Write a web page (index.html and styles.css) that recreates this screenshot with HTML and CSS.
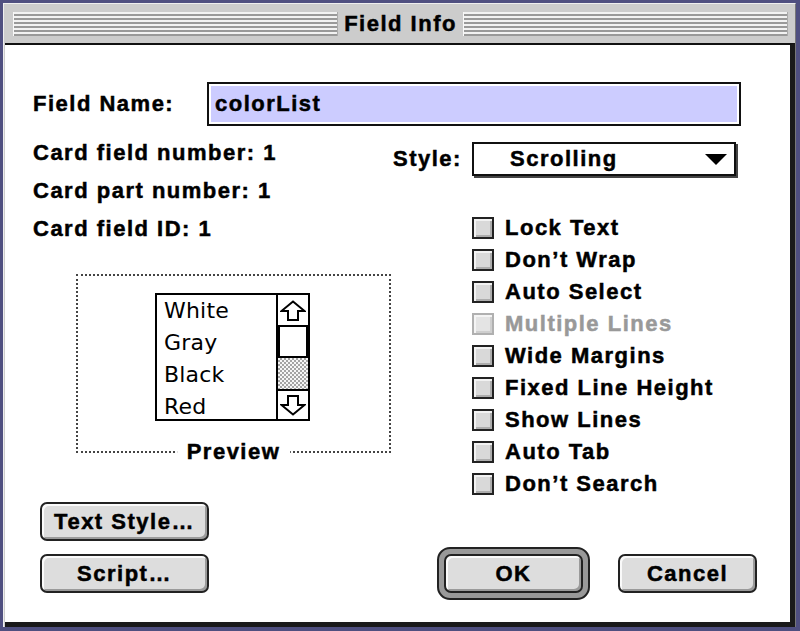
FILE: index.html
```html
<!DOCTYPE html>
<html>
<head>
<meta charset="utf-8">
<title>Field Info</title>
<link rel="stylesheet" href="styles.css">
</head>
<body>
<div class="window">
  <div class="titlebar">
    <div class="stripes"></div>
    <div class="title">Field Info</div>
    <div class="stripes"></div>
  </div>
  <div class="content">
    <div class="name-row">
      <div class="label name-label">Field Name:</div>
      <div class="edit"><div class="edit-sel label">colorList</div></div>
    </div>
    <div class="main">
      <div class="left">
        <div class="info">
          <div class="label">Card field number: 1</div>
          <div class="label">Card part number: 1</div>
          <div class="label">Card field ID: 1</div>
        </div>
        <div class="preview">
          <div class="list">
            <div class="items">
              <div>White</div>
              <div>Gray</div>
              <div>Black</div>
              <div>Red</div>
            </div>
            <div class="scrollbar">
              <div class="arrow">
                <svg width="26" height="21" viewBox="0 0 26 21"><polygon points="13,1.5 24.5,11 18,11 18,20 8,20 8,11 1.5,11" fill="#fff" stroke="#000" stroke-width="2" stroke-linejoin="miter"/></svg>
              </div>
              <div class="thumb"></div>
              <div class="track"></div>
              <div class="arrow down">
                <svg width="26" height="21" viewBox="0 0 26 21"><polygon points="8,1 18,1 18,10 24.5,10 13,19.5 1.5,10 8,10" fill="#fff" stroke="#000" stroke-width="2" stroke-linejoin="miter"/></svg>
              </div>
            </div>
          </div>
          <div class="preview-label label">Preview</div>
        </div>
        <div class="btn wide text-style label">Text Style…</div>
        <div class="btn wide script label">Script…</div>
      </div>
      <div class="right">
        <div class="style-row">
          <div class="label style-label">Style:</div>
          <div class="popup">
            <span class="label">Scrolling</span>
            <svg width="22" height="11" viewBox="0 0 22 11"><polygon points="0,0 22,0 11,11" fill="#000"/></svg>
          </div>
        </div>
        <div class="checks">
          <div class="check"><span class="box"></span><span class="label">Lock Text</span></div>
          <div class="check"><span class="box"></span><span class="label">Don’t Wrap</span></div>
          <div class="check"><span class="box"></span><span class="label">Auto Select</span></div>
          <div class="check disabled"><span class="box"></span><span class="label">Multiple Lines</span></div>
          <div class="check"><span class="box"></span><span class="label">Wide Margins</span></div>
          <div class="check"><span class="box"></span><span class="label">Fixed Line Height</span></div>
          <div class="check"><span class="box"></span><span class="label">Show Lines</span></div>
          <div class="check"><span class="box"></span><span class="label">Auto Tab</span></div>
          <div class="check"><span class="box"></span><span class="label">Don’t Search</span></div>
        </div>
        <div class="ok-row">
          <div class="default-ring"><div class="btn ok label">OK</div></div>
          <div class="btn cancel label">Cancel</div>
        </div>
      </div>
    </div>
  </div>
</div>
</body>
</html>
```

FILE: styles.css
```css
* { box-sizing: border-box; }

html, body {
  margin: 0;
  height: 100%;
}

body {
  background: #4f4f80;
  overflow: hidden;
  font-family: "Liberation Sans", Arial, sans-serif;
  color: #000;
}

.window {
  margin: 3px 0 0 3px;
  width: 793px;
  height: 624px;
  background: #cccccc;
  border-top: 1px solid #eeeeee;
  border-left: 1px solid #eeeeee;
  border-right: 1px solid #777;
  display: flex;
  flex-direction: column;
}

.titlebar {
  height: 39px;
  flex: none;
  display: flex;
  align-items: center;
  padding: 0 7px 0 9px;
}

.stripes {
  flex: 1;
  height: 24px;
  background: repeating-linear-gradient(to bottom, #f2f2f2 0 2px, #999999 2px 4px);
  border-left: 1px solid #f8f8f8;
  border-right: 1px solid #aaa;
}

.title {
  padding: 0 6px;
  font-weight: bold;
  font-size: 22px;
  letter-spacing: 1.5px;
  white-space: nowrap;
  -webkit-text-stroke-width: 0.5px;
}

.content {
  flex: 1;
  margin-left: 1px;
  background: #fff;
  border-top: 2px solid #111;
  border-right: 5px solid #1a1a1a;
  border-bottom: 5px solid #1a1a1a;
}

.label {
  font-weight: bold;
  font-size: 22px;
  letter-spacing: 1.5px;
  white-space: nowrap;
  -webkit-text-stroke-width: 0.5px;
}

.name-row {
  display: flex;
  align-items: center;
  margin-top: 37px;
  padding-left: 28px;
  height: 44px;
}

.name-label { width: 174px; }

.edit {
  width: 534px;
  height: 44px;
  border: 2px solid #111;
  padding: 2px;
  background: #fff;
}

.edit-sel {
  height: 100%;
  background: #ccccff;
  padding-left: 4px;
  line-height: 36px;
}

.main { display: flex; }

.left {
  width: 388px;
  display: flex;
  flex-direction: column;
  align-items: flex-start;
}

.info {
  margin-top: 8px;
  padding-left: 28px;
  line-height: 38px;
}

.preview {
  position: relative;
  margin: 26px 0 0 71px;
  width: 315px;
  height: 179px;
  border: 2px dotted #444;
  padding: 17px 0 0 77px;
}

.list {
  display: flex;
  width: 155px;
  height: 128px;
  border: 2px solid #000;
}

.items {
  flex: 1;
  padding-left: 7px;
  font-family: "DejaVu Sans", Verdana, sans-serif;
  font-size: 22px;
  line-height: 32px;
  letter-spacing: 0.2px;
}

.scrollbar {
  width: 32px;
  flex: none;
  border-left: 2px solid #000;
  display: flex;
  flex-direction: column;
}

.arrow {
  height: 30px;
  display: flex;
  align-items: center;
  justify-content: center;
}

.arrow.down { border-top: 2px solid #000; }

.thumb {
  height: 33px;
  border: 2px solid #000;
  background: #fff;
}

.track {
  height: 31px;
  background-color: #eee;
  background-image: repeating-conic-gradient(#a4a4a4 0 25%, #f6f6f6 0 50%);
  background-size: 4px 4px;
}

.preview-label {
  position: absolute;
  left: 50%;
  bottom: -13px;
  transform: translateX(-50%);
  background: #fff;
  padding: 0 10px;
  line-height: 24px;
}

.btn {
  display: flex;
  align-items: center;
  justify-content: center;
  border: 2px solid #222;
  border-radius: 7px;
  background: #dddddd;
  box-shadow: inset 2px 2px 0 #fafafa, inset -2px -2px 0 #9a9a9a;
}

.btn.wide {
  width: 169px;
  height: 39px;
  margin-left: 35px;
}

.btn.text-style { margin-top: 49px; }
.btn.script { margin-top: 13px; }

.right {
  flex: 1;
  display: flex;
  flex-direction: column;
  align-items: flex-start;
}

.style-row {
  display: flex;
  align-items: center;
  margin-top: 16px;
}

.style-label { width: 79px; }

.popup {
  width: 264px;
  height: 34px;
  border: 2px solid #111;
  box-shadow: 2px 2px 0 #444;
  display: flex;
  align-items: center;
  justify-content: space-between;
  padding: 0 7px 0 36px;
  background: #fff;
}

.checks {
  margin-top: 36px;
  margin-left: 79px;
}

.check {
  display: flex;
  align-items: center;
  height: 32px;
}

.box {
  width: 22px;
  height: 22px;
  flex: none;
  margin-right: 11px;
  border: 2px solid #222;
  background: #d9d9d9;
  box-shadow: inset 2px 2px 0 #f2f2f2, inset -2px -2px 0 #adadad;
}

.check.disabled .box {
  border-color: #b0b0b0;
  background: #e4e4e4;
  box-shadow: inset 2px 2px 0 #f4f4f4, inset -2px -2px 0 #cfcfcf;
}

.check.disabled .label { color: #999; }

.ok-row {
  display: flex;
  align-items: center;
  margin-top: 47px;
  margin-left: 44px;
  gap: 28px;
}

.default-ring {
  padding: 5px;
  border: 2px solid #222;
  border-radius: 13px;
  background: #999;
}

.btn.ok {
  width: 139px;
  height: 39px;
}

.btn.cancel {
  width: 139px;
  height: 39px;
}
```
